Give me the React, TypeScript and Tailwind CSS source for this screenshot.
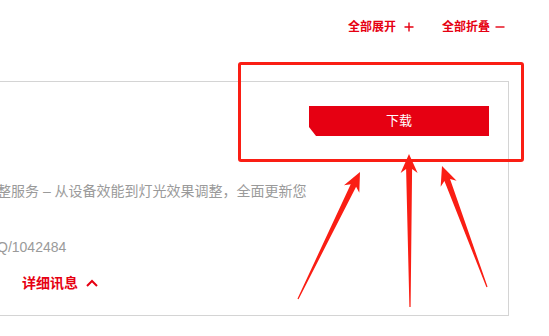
import React from "react";

const RED = "#e60012";
const MARK = "#fa1e14";

type Arrow = { tail: [number, number]; tip: [number, number] };

const arrows: Arrow[] = [
  { tail: [298, 299], tip: [360, 172] },
  { tail: [410, 307], tip: [409, 154] },
  { tail: [487, 287], tip: [442, 166] },
];

// Flecha de anotación: fina en la cola, ensanchándose hasta la punta
function arrowPoints({ tail, tip }: Arrow) {
  const headLen = 15;
  const headW = 17;
  const shaftW = 6;
  const dx = tip[0] - tail[0];
  const dy = tip[1] - tail[1];
  const len = Math.hypot(dx, dy);
  const d = [dx / len, dy / len];
  const n = [-d[1], d[0]];
  const at = (back: number, side: number) =>
    `${tip[0] - d[0] * back + n[0] * side},${tip[1] - d[1] * back + n[1] * side}`;
  return [
    `${tail[0] + n[0] * 0.6},${tail[1] + n[1] * 0.6}`,
    at(headLen, shaftW / 2),
    at(headLen + 4, headW / 2),
    `${tip[0]},${tip[1]}`,
    at(headLen + 4, -headW / 2),
    at(headLen, -shaftW / 2),
    `${tail[0] - n[0] * 0.6},${tail[1] - n[1] * 0.6}`,
  ].join(" ");
}

function PlusIcon() {
  return (
    <svg width="10" height="10" viewBox="0 0 10 10" className="ml-[8px]">
      <path d="M5 0.5V9.5M0.5 5H9.5" stroke={RED} strokeWidth="1.4" />
    </svg>
  );
}

function MinusIcon() {
  return (
    <svg width="10" height="10" viewBox="0 0 10 10" className="ml-[5px]">
      <path d="M0.5 5H9.5" stroke={RED} strokeWidth="1.4" />
    </svg>
  );
}

export default function App() {
  return (
    <div
      className="relative h-[336px] w-[549px] overflow-hidden bg-white"
      style={{ fontFamily: '"Liberation Sans", "Noto Sans CJK SC", sans-serif' }}
    >
      {/* Controles de expandir / contraer */}
      <div className="flex h-[81px] items-start justify-end gap-[28px] pr-[44px] pt-[19px]">
        <button className="flex items-center text-[12px] font-bold leading-[16px] text-[#e60012]">
          全部展开
          <PlusIcon />
        </button>
        <button className="flex items-center text-[12px] font-bold leading-[16px] text-[#e60012]">
          全部折叠
          <MinusIcon />
        </button>
      </div>

      {/* Tarjeta de descarga */}
      <div className="mr-[40px] flex border-y border-r border-[#d4d4d4]">
        <div className="min-w-0 flex-1 whitespace-nowrap pb-[22px] pt-[99px] text-[14px] leading-[20px] text-[#9a9a9a]">
          <p className="-ml-[3px]">整服务 – 从设备效能到灯光效果调整，全面更新您</p>
          <p className="-ml-[3px] mt-[36px]">Q/1042484</p>
          <button className="ml-[22px] mt-[16px] flex items-center font-bold text-[#e60012]">
            详细讯息
            <svg width="12" height="8" viewBox="0 0 12 8" className="ml-[8px]">
              <path d="M1 7L6 2L11 7" fill="none" stroke={RED} strokeWidth="2" />
            </svg>
          </button>
        </div>
        <div className="shrink-0 pr-[19px] pt-[24px]">
          <button className="flex h-[30px] w-[180px] items-center justify-center bg-[#e60012] text-[13px] text-white [clip-path:polygon(0_0,100%_0,100%_100%,7px_100%,0_calc(100%-9px))]">
            下载
          </button>
        </div>
      </div>

      {/* Anotaciones superpuestas */}
      <div className="pointer-events-none absolute left-[238px] top-[62px] h-[100px] w-[286px] rounded-[3px] border-[3px] border-[#fa1e14]" />
      <svg className="pointer-events-none absolute left-0 top-0" width="549" height="336">
        {arrows.map((a, i) => (
          <polygon key={i} points={arrowPoints(a)} fill={MARK} />
        ))}
      </svg>
    </div>
  );
}
